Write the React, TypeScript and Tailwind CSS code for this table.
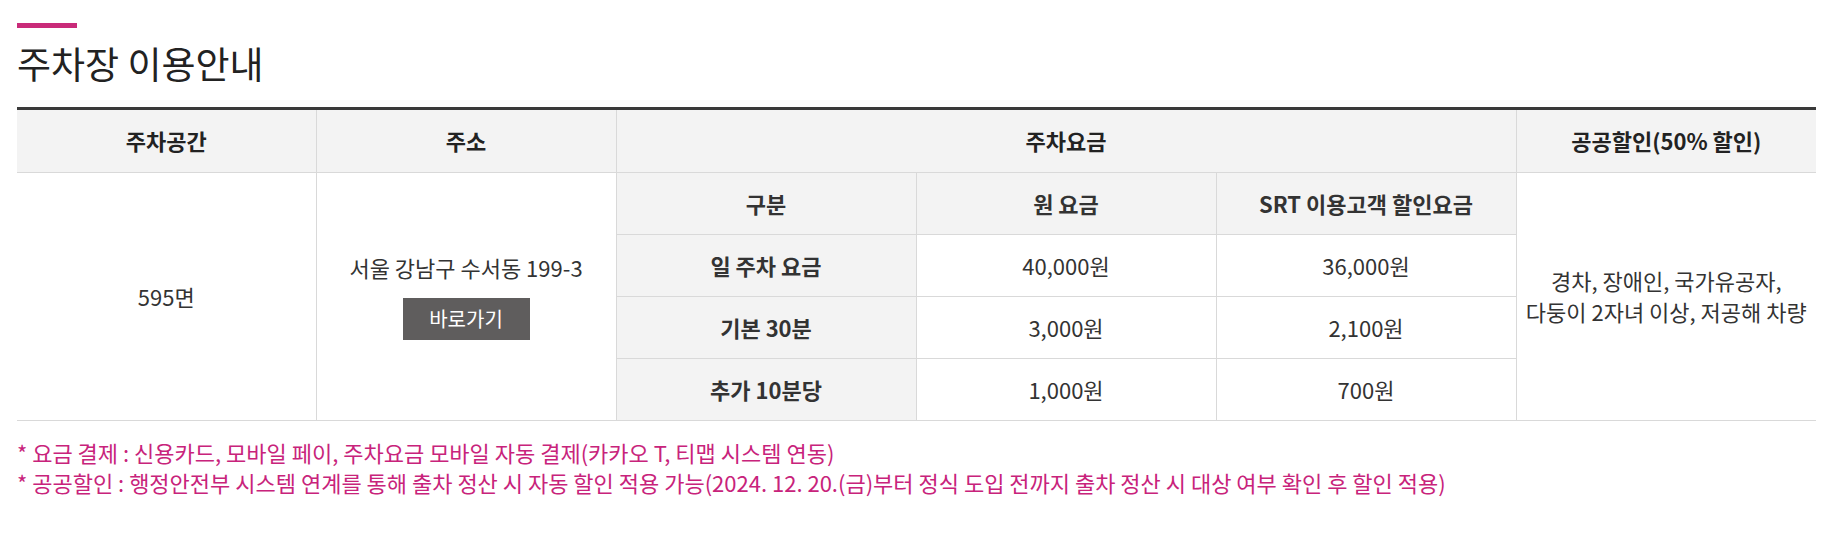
const font = "font-['Noto_Sans_CJK_KR','Noto_Sans_KR',sans-serif]";

const rows = [
  { label: "일 주차 요금", base: "40,000원", srt: "36,000원" },
  { label: "기본 30분", base: "3,000원", srt: "2,100원" },
  { label: "추가 10분당", base: "1,000원", srt: "700원" },
];

export default function App() {
  const th = "h-[62px] border-b border-[#d9d9d9] bg-[#f3f3f3] p-0 text-center align-middle text-[22px] font-bold text-[#222]";
  const td = "h-[62px] border-b border-l border-[#d9d9d9] p-0 text-center align-middle text-[22px] text-[#333]";
  const sub = `${td} bg-[#f3f3f3] font-bold text-[#222]`;

  return (
    <div className={`${font} min-h-[535px] bg-white pl-[17px] pr-[30px] pt-[23px] text-[#333]`}>
      <div className="h-[5px] w-[60px] bg-[#c92b79]" />
      <h2 className="mt-[13px] mb-[22px] text-[37px] font-normal leading-[44px] text-[#222]">주차장 이용안내</h2>

      <div className="border-t-[3px] border-[#3a3a3a]">
        <table className="w-full table-fixed border-collapse">
          <colgroup>
            <col className="w-[299px]" />
            <col className="w-[300px]" />
            <col className="w-[300px]" />
            <col className="w-[300px]" />
            <col className="w-[300px]" />
            <col className="w-[300px]" />
          </colgroup>
          <thead>
            <tr>
              <th className={th}>주차공간</th>
              <th className={`${th} border-l`}>주소</th>
              <th className={`${th} border-l`} colSpan={3}>
                주차요금
              </th>
              <th className={`${th} border-l`}>공공할인(50% 할인)</th>
            </tr>
          </thead>
          <tbody>
            <tr>
              <td className={`${td} border-l-0`} rowSpan={4}>
                595면
              </td>
              <td className={td} rowSpan={4}>
                <div className="leading-[30px]">서울 강남구 수서동 199-3</div>
                <button className="mt-[16px] h-[42px] w-[127px] bg-[#5f5d5d] text-[20px] text-white">바로가기</button>
              </td>
              <td className={sub}>구분</td>
              <td className={sub}>원 요금</td>
              <td className={sub}>SRT 이용고객 할인요금</td>
              <td className={`${td} leading-[31px]`} rowSpan={4}>
                경차, 장애인, 국가유공자,
                <br />
                다둥이 2자녀 이상, 저공해 차량
              </td>
            </tr>
            {rows.map((r) => (
              <tr key={r.label}>
                <td className={sub}>{r.label}</td>
                <td className={td}>{r.base}</td>
                <td className={td}>{r.srt}</td>
              </tr>
            ))}
          </tbody>
        </table>
      </div>

      <ul className="mt-[16px] text-[22px] leading-[30px] text-[#c8237b]">
        <li>* 요금 결제 : 신용카드, 모바일 페이, 주차요금 모바일 자동 결제(카카오 T, 티맵 시스템 연동)</li>
        <li>
          * 공공할인 : 행정안전부 시스템 연계를 통해 출차 정산 시 자동 할인 적용 가능(2024. 12. 20.(금)부터 정식 도입 전까지 출차 정산 시 대상 여부 확인 후 할인 적용)
        </li>
      </ul>
    </div>
  );
}
